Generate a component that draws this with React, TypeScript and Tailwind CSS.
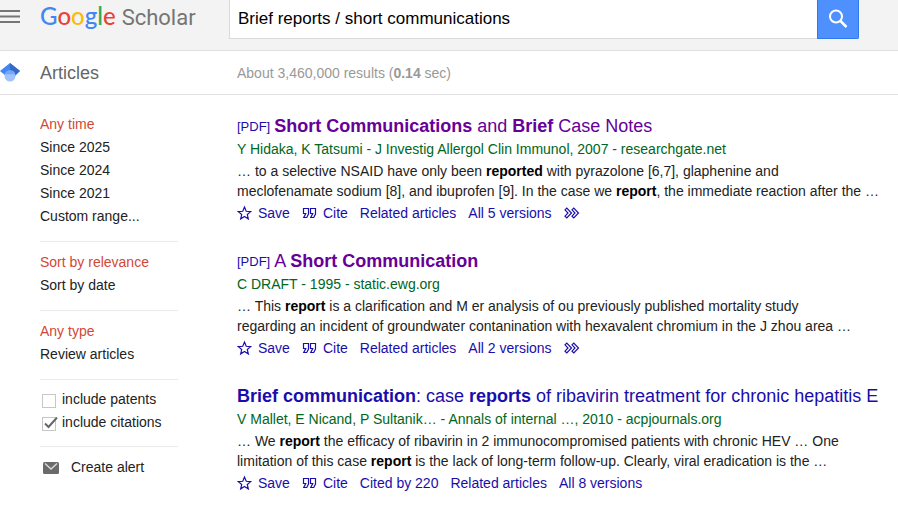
import type { ReactNode } from 'react';
import clsx from 'clsx';

type Result = {
  id: string;
  pdf?: boolean;
  visited?: boolean;
  title: ReactNode;
  source: string;
  snippet: ReactNode[];
  links: string[];
  more?: boolean;
};

const results: Result[] = [
  {
    id: 'case-notes',
    pdf: true,
    visited: true,
    title: <><b>Short Communications</b> and <b>Brief</b> Case Notes</>,
    source: 'Y Hidaka, K Tatsumi - J Investig Allergol Clin Immunol, 2007 - researchgate.net',
    snippet: [
      <>… to a selective NSAID have only been <b className="text-black">reported</b> with pyrazolone [6,7], glaphenine and</>,
      <>meclofenamate sodium [8], and ibuprofen [9]. In the case we <b className="text-black">report</b>, the immediate reaction after the …</>,
    ],
    links: ['Related articles', 'All 5 versions'],
    more: true,
  },
  {
    id: 'draft',
    pdf: true,
    visited: true,
    title: <>A <b>Short Communication</b></>,
    source: 'C DRAFT - 1995 - static.ewg.org',
    snippet: [
      <>… This <b className="text-black">report</b> is a clarification and M er analysis of ou previously published mortality study</>,
      <>regarding an incident of groundwater contanination with hexavalent chromium in the J zhou area …</>,
    ],
    links: ['Related articles', 'All 2 versions'],
    more: true,
  },
  {
    id: 'ribavirin',
    title: <><b>Brief communication</b>: case <b>reports</b> of ribavirin treatment for chronic hepatitis E</>,
    source: 'V Mallet, E Nicand, P Sultanik… - Annals of internal …, 2010 - acpjournals.org',
    snippet: [
      <>… We <b className="text-black">report</b> the efficacy of ribavirin in 2 immunocompromised patients with chronic HEV … One</>,
      <>limitation of this case <b className="text-black">report</b> is the lack of long-term follow-up. Clearly, viral eradication is the …</>,
    ],
    links: ['Cited by 220', 'Related articles', 'All 8 versions'],
  },
];

const filters = [
  ['Any time', 'Since 2025', 'Since 2024', 'Since 2021', 'Custom range...'],
  ['Sort by relevance', 'Sort by date'],
  ['Any type', 'Review articles'],
];

function OutlineIcon({ d }: { d: string }) {
  return (
    <svg className="h-4 w-4 shrink-0" viewBox="0 0 16 16" fill="none" stroke="currentColor" strokeWidth="1.2" aria-hidden="true">
      <path d={d} />
    </svg>
  );
}

const starPath = 'M7.5 11.57l3.824 2.308-1.015-4.35 3.379-2.926-4.45-.378L7.5 2.122 5.761 6.224l-4.449.378 3.379 2.926-1.015 4.35z';
const citePath = 'M6.5 3.5H1.5V8.5H3.75L1.75 12.5H4.75L6.5 9zM13.5 3.5H8.5V8.5H10.75L8.75 12.5H11.75L13.5 9z';
const morePath = 'M1 4.800L2.800 3 7.500 8l-4.700 5L1 11.200 4 8zM8 4.800L9.800 3l4.700 5-4.700 5L8 11.200 11 8z';

function Logo() {
  return (
    <a href="#" className="flex items-baseline gap-[6px] whitespace-nowrap leading-7">
      <span className="font-['Lato',sans-serif] text-2xl font-medium">
        <span className="text-[#4285f4]">G</span>
        <span className="text-[#ea4335]">o</span>
        <span className="text-[#fbbc05]">o</span>
        <span className="text-[#4285f4]">g</span>
        <span className="text-[#34a853]">l</span>
        <span className="text-[#ea4335]">e</span>
      </span>
      <span className="font-['Roboto',sans-serif] text-[22px] text-[#757575]">Scholar</span>
    </a>
  );
}

function Header() {
  return (
    <header className="flex h-[51px] items-start border-b border-[#e0e0e0] bg-[#f3f3f3]">
      <button type="button" aria-label="Menu" className="mt-2 w-10 shrink-0">
        <svg className="h-4 w-5" viewBox="0 0 20 16" fill="#757575" aria-hidden="true">
          <path d="M0 2h20v2H0zM0 7.500h20v2H0zM0 13h20v2H0z" />
        </svg>
      </button>
      <div className="w-[189px] shrink-0">
        <Logo />
      </div>
      <form className="mr-[39px] flex h-[39px] flex-1" onSubmit={(e) => e.preventDefault()}>
        <input
          type="text"
          aria-label="Search"
          defaultValue="Brief reports / short communications"
          className="min-w-0 flex-1 border border-t-0 border-r-0 border-[#d9d9d9] bg-white px-2 text-[17px] text-black outline-none"
        />
        <button type="submit" aria-label="Search" className="flex w-[42px] items-center justify-center rounded-br-xs border border-t-0 border-[#3079ed] bg-[#4d90fe]">
          <svg className="h-5 w-5" viewBox="0 0 20 20" fill="none" stroke="#fff" strokeWidth="2" aria-hidden="true">
            <circle cx="8" cy="7.500" r="6" />
            <path d="M12.500 12l6 6" strokeWidth="2.500" />
          </svg>
        </button>
      </form>
    </header>
  );
}

function SubHeader() {
  return (
    <div className="flex h-11 items-center border-b border-[#e0e0e0]">
      <div className="w-10 shrink-0">
        <svg className="h-5 w-5" viewBox="0 0 20 20" aria-hidden="true">
          <path fill="#4285f4" d="M10 0L0 8l6 5h8l6-5z" />
          <path fill="#356ac3" d="M10 0l10 8-5 5-5-5z" />
          <circle cx="10" cy="13" r="5.500" fill="#a0c3ff" />
          <path fill="#76a7fa" d="M4.700 11.200a5.500 5.500 0 0 1 10.600 0z" />
        </svg>
      </div>
      <h1 className="w-[197px] shrink-0 text-lg text-[#666]">Articles</h1>
      <p className="text-[#999]">About 3,460,000 results (<b>0.14</b> sec)</p>
    </div>
  );
}

function CheckOption({ id, label, checked = false }: { id: string; label: string; checked?: boolean }) {
  return (
    <div className="flex items-center gap-[6px] pl-[2px]">
      <span className="relative flex pt-[2px]">
        <input id={id} type="checkbox" defaultChecked={checked} className="peer h-[14px] w-[14px] appearance-none border border-[#c6c6c6] bg-white" />
        <svg className="pointer-events-none absolute top-[2px] left-0 hidden h-[14px] w-4 peer-checked:block" viewBox="0 0 16 14" fill="none" stroke="#666" strokeWidth="2" aria-hidden="true">
          <path d="M3 6.500l3.500 3.500L15 0.500" />
        </svg>
      </span>
      <label htmlFor={id}>{label}</label>
    </div>
  );
}

function Sidebar() {
  return (
    <nav className="ml-10 w-[138px] shrink-0 divide-y divide-[#ebebeb] pt-[18px] leading-[23px]">
      {filters.map((group) => (
        <ul key={group[0]} className="pt-[9px] pb-[13px] first:pt-0">
          {group.map((item, i) => (
            <li key={item}>
              <a href="#" className={clsx(i === 0 && 'text-[#d14836]')}>{item}</a>
            </li>
          ))}
        </ul>
      ))}
      <div className="pt-2 pb-3">
        <CheckOption id="patents" label="include patents" />
        <CheckOption id="citations" label="include citations" checked />
      </div>
      <div className="pt-[9px]">
        <a href="#" className="flex items-center gap-3 pl-[3px]">
          <svg className="h-3 w-4" viewBox="0 0 16 12" aria-hidden="true">
            <rect width="16" height="12" rx="1.500" fill="#6b6b6b" />
            <path d="M2 1.500L8 7l6-5.500" fill="none" stroke="#ddd" strokeWidth="1.400" />
          </svg>
          Create alert
        </a>
      </div>
    </nav>
  );
}

function ResultItem({ result }: { result: Result }) {
  return (
    <article className="whitespace-nowrap">
      <h3 className={clsx('text-lg leading-6', result.visited ? 'text-[#660099]' : 'text-[#1a0dab]')}>
        {result.pdf && <span className="mr-1 align-[1px] text-[13px] leading-none text-[#1a0dab]">[PDF]</span>}
        <a href="#">{result.title}</a>
      </h3>
      <div className="leading-[23px] text-[#006621]">{result.source}</div>
      <div className="leading-5">
        {result.snippet.map((line, i) => (
          <p key={i}>{line}</p>
        ))}
      </div>
      <div className="flex h-6 items-center gap-3 text-[#1a0dab]">
        <a href="#" className="flex items-center gap-[5px]"><OutlineIcon d={starPath} />Save</a>
        <a href="#" className="flex items-center gap-[5px]"><OutlineIcon d={citePath} />Cite</a>
        {result.links.map((link) => (
          <a key={link} href="#">{link}</a>
        ))}
        {result.more && <button type="button" aria-label="More"><OutlineIcon d={morePath} /></button>}
      </div>
    </article>
  );
}

export default function App() {
  return (
    <div className="min-h-screen overflow-x-hidden bg-white font-['Liberation_Sans',Arial,sans-serif] text-sm text-[#222]">
      <Header />
      <SubHeader />
      <div className="flex">
        <Sidebar />
        <main className="ml-[59px] flex min-w-0 flex-1 flex-col gap-6 pt-[19px]">
          {results.map((result) => (
            <ResultItem key={result.id} result={result} />
          ))}
        </main>
      </div>
    </div>
  );
}
